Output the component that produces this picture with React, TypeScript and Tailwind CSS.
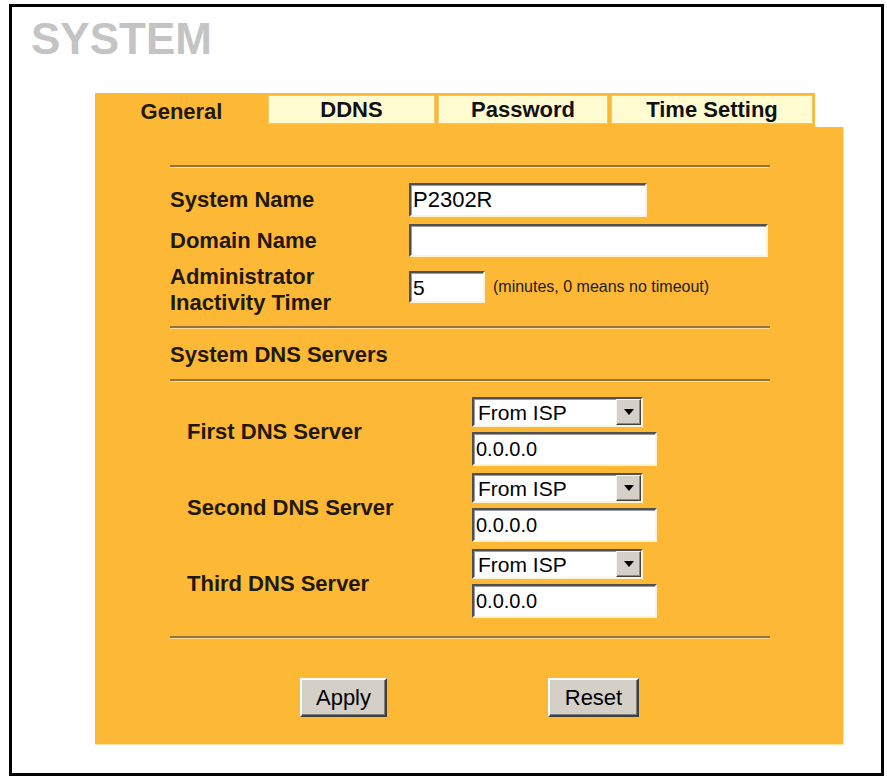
const sunken =
  "border-2 border-t-[#505050] border-l-[#505050] border-r-[#fff3d6] border-b-[#fff3d6] shadow-[inset_1px_1px_0_#9a9a9a] bg-white";

function Field({ value, className, text = "text-[21px]" }: { value: string; className: string; text?: string }) {
  return (
    <div className={`${sunken} ${className} flex items-center px-[2px] ${text} text-black leading-none`}>
      {value}
    </div>
  );
}

function Divider() {
  return <div className="w-[600px] h-[3px] border-t-2 border-t-[#8f7444] border-b border-b-[#ffd98f]" />;
}

function Select() {
  return (
    <div className={`${sunken} w-[171px] h-[30px] flex items-stretch`}>
      <span className="flex-1 flex items-center pl-[4px] text-[21px] leading-none text-black">From ISP</span>
      <span className="w-[25px] bg-[#d4d0c8] border border-t-[#f4f4f4] border-l-[#f4f4f4] border-r-[#404040] border-b-[#404040] shadow-[inset_-1px_-1px_0_#8a8a8a] flex items-center justify-center">
        <svg width="10" height="6" viewBox="0 0 10 6">
          <polygon points="0,0 10,0 5,6" fill="#000" />
        </svg>
      </span>
    </div>
  );
}

function DnsGroup({ label }: { label: string }) {
  return (
    <div className="flex items-center h-[69px]">
      <div className="w-[302px] pl-[17px] text-[22px] font-bold leading-none text-[#22180a]">{label}</div>
      <div className="flex flex-col gap-[5px]">
        <Select />
        <Field value="0.0.0.0" className="w-[185px] h-[34px]" text="text-[20px]" />
      </div>
    </div>
  );
}

function Button({ label, w }: { label: string; w: string }) {
  return (
    <div
      className={`${w} h-[39px] bg-[#d4d0c8] border-2 border-t-white border-l-white border-r-[#404040] border-b-[#404040] shadow-[inset_-1px_-1px_0_#808080] flex items-center justify-center text-[22px] leading-none text-black`}
    >
      {label}
    </div>
  );
}

export default function App() {
  const label = "text-[22px] font-bold leading-[26px] text-[#22180a]";
  return (
    <div className="w-[887px] h-[778px] bg-white pt-[4px] pl-[9px] font-['Liberation_Sans',Arial,sans-serif]">
      <div className="w-[875px] h-[772px] border-[3px] border-black">
        <div className="pt-[10px] pl-[19px] h-[54px] text-[44px] leading-[44px] font-bold text-[#c4c4c4]">SYSTEM</div>

        <div className="ml-[83px] mt-[32px]">
          {/* tabs */}
          <div className="flex w-[720px] h-[34px] bg-[#fdb935] pr-[2px]">
            <div className="w-[173px] flex items-center justify-center pt-[3px] text-[22px] font-bold text-[#22180a]">
              General
            </div>
            <div className="w-[167px] mt-[2px] h-[29px] bg-[#fffcd2] border border-[#efc86e] flex items-center justify-center text-[22px] font-bold text-[#111]">
              DDNS
            </div>
            <div className="ml-[3px] w-[170px] mt-[2px] h-[29px] bg-[#fffcd2] border border-[#efc86e] flex items-center justify-center text-[22px] font-bold text-[#111]">
              Password
            </div>
            <div className="ml-[3px] w-[202px] mt-[2px] h-[29px] bg-[#fffcd2] border border-[#efc86e] flex items-center justify-center text-[22px] font-bold text-[#111]">
              Time Setting
            </div>
          </div>

          {/* panel */}
          <div className="w-[749px] h-[618px] bg-[#fdb935] pl-[75px] pt-[38px] border-r border-b border-[#ffe2a0]">
            <Divider />

            <div className="mt-[15px] flex items-center h-[34px]">
              <div className={`w-[239px] ${label}`}>System Name</div>
              <Field value="P2302R" className="w-[238px] h-[34px]" text="text-[22px]" />
            </div>
            <div className="mt-[7px] flex items-center h-[33px]">
              <div className={`w-[239px] ${label}`}>Domain Name</div>
              <Field value="" className="w-[359px] h-[33px]" />
            </div>
            <div className="mt-[7px] flex items-start h-[52px]">
              <div className={`w-[239px] ${label}`}>
                Administrator
                <br />
                Inactivity Timer
              </div>
              <div className="mt-[7px] flex items-center">
                <Field value="5" className="w-[76px] h-[32px]" />
                <span className="ml-[8px] text-[16px] text-[#1c1c1c] leading-none">(minutes, 0 means no timeout)</span>
              </div>
            </div>

            <div className="mt-[10px]">
              <Divider />
            </div>
            <div className={`mt-[13px] ${label}`}>System DNS Servers</div>
            <div className="mt-[11px]">
              <Divider />
            </div>

            <div className="mt-[15px] flex flex-col gap-[7px]">
              <DnsGroup label="First DNS Server" />
              <DnsGroup label="Second DNS Server" />
              <DnsGroup label="Third DNS Server" />
            </div>

            <div className="mt-[18px]">
              <Divider />
            </div>

            <div className="mt-[39px] ml-[130px] flex gap-[161px]">
              <Button label="Apply" w="w-[87px]" />
              <Button label="Reset" w="w-[91px]" />
            </div>
          </div>
        </div>
      </div>
    </div>
  );
}
